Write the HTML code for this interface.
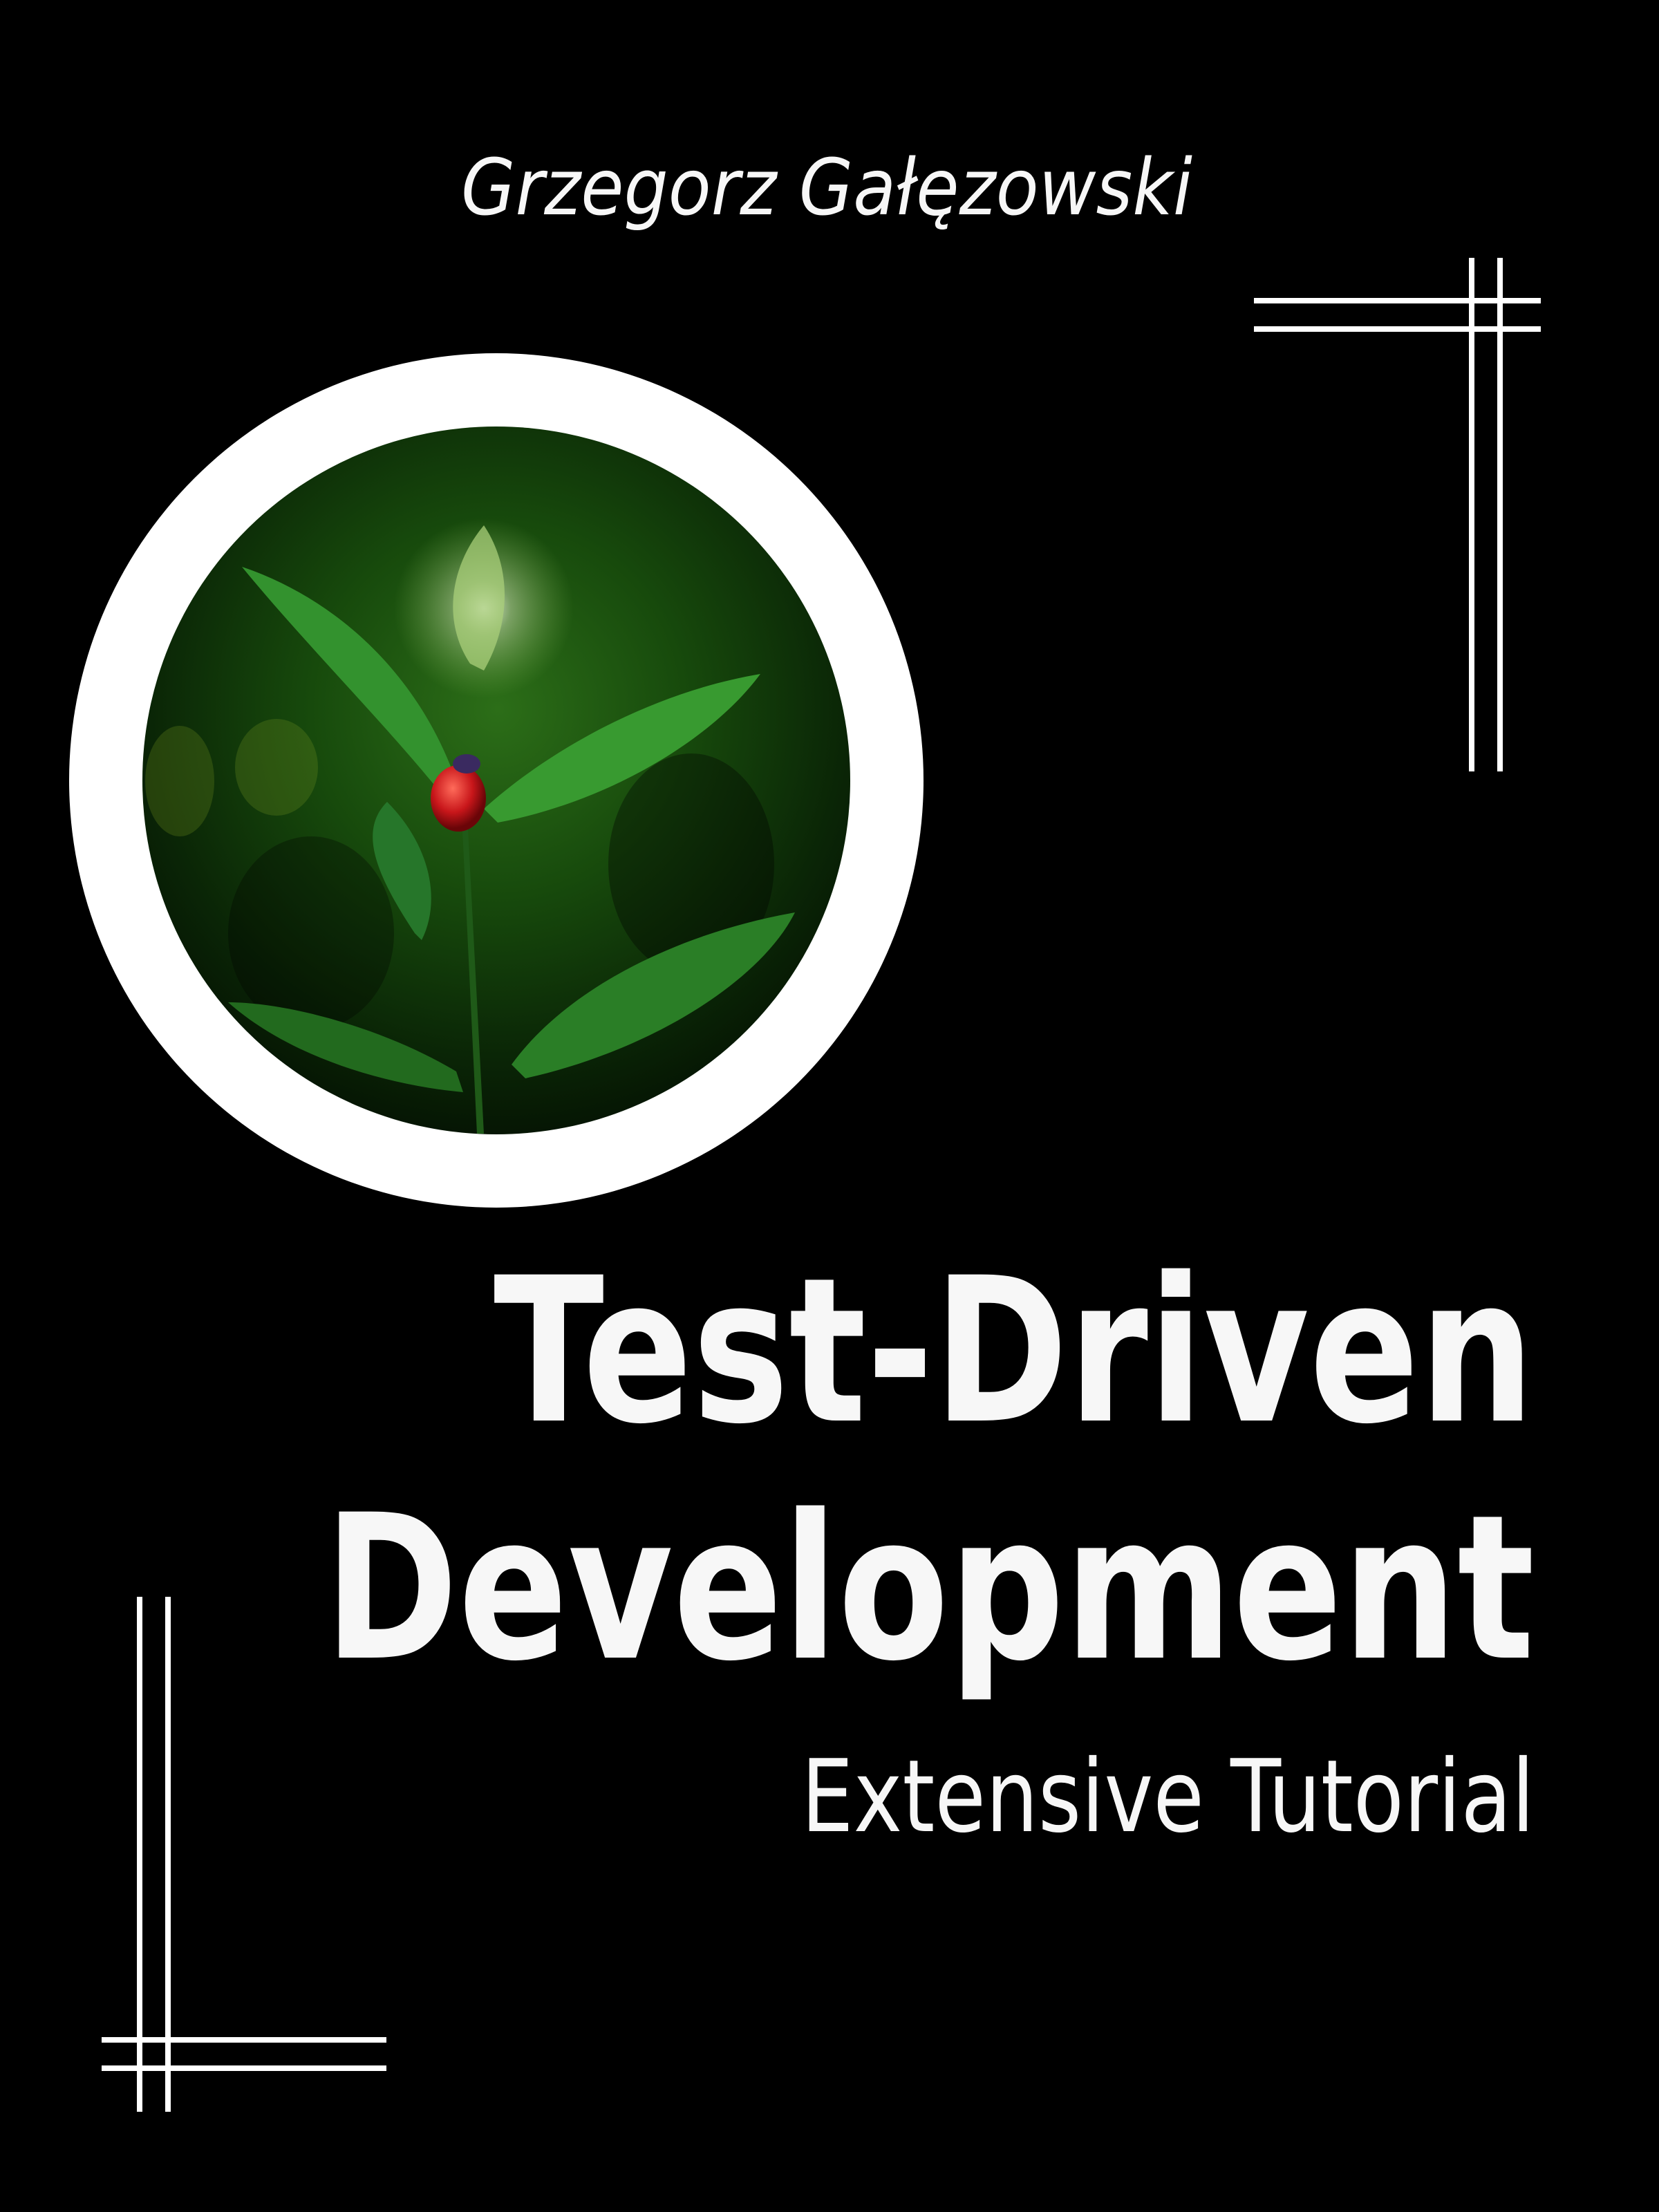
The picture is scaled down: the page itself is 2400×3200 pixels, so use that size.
<!DOCTYPE html>
<html><head><meta charset="utf-8"><style>html,body{margin:0;padding:0;background:#000;}svg{display:block}</style></head>
<body>
<svg width="2400" height="3200" viewBox="0 0 2400 3200" xmlns="http://www.w3.org/2000/svg">
<defs>
<radialGradient id="bg" cx="0.5" cy="0.4" r="0.65">
<stop offset="0" stop-color="#2c6e18"/>
<stop offset="0.4" stop-color="#174a0c"/>
<stop offset="0.75" stop-color="#0a2506"/>
<stop offset="1" stop-color="#030d02"/>
</radialGradient>
<radialGradient id="glow" cx="0.5" cy="0.5" r="0.5">
<stop offset="0" stop-color="#ffffff" stop-opacity="0.9"/>
<stop offset="0.3" stop-color="#e8f5c8" stop-opacity="0.45"/>
<stop offset="1" stop-color="#9acd60" stop-opacity="0"/>
</radialGradient>
<radialGradient id="bug" cx="0.4" cy="0.35" r="0.6">
<stop offset="0" stop-color="#ff6b5a"/>
<stop offset="0.6" stop-color="#c8161a"/>
<stop offset="1" stop-color="#6a0508"/>
</radialGradient>
<clipPath id="c"><circle cx="718" cy="1129" r="512"/></clipPath>
</defs>
<rect width="2400" height="3200" fill="#000"/>
<circle cx="718" cy="1129" r="618" fill="#fff"/>
<g clip-path="url(#c)">
<rect x="200" y="610" width="1040" height="1040" fill="url(#bg)"/>
<ellipse cx="260" cy="1130" rx="50" ry="80" fill="#5d7a1a" opacity="0.35"/>
<ellipse cx="400" cy="1110" rx="60" ry="70" fill="#6a8a20" opacity="0.3"/>
<ellipse cx="1000" cy="1250" rx="120" ry="160" fill="#000" opacity="0.35"/>
<ellipse cx="450" cy="1350" rx="120" ry="140" fill="#000" opacity="0.3"/>
<path d="M640 1150 C560 1050 440 930 350 820 C470 860 600 960 660 1130 Z" fill="#33922e"/>
<path d="M700 1170 C800 1080 950 1000 1100 975 C1030 1070 880 1160 720 1190 Z" fill="#389a30"/>
<path d="M740 1540 C820 1430 980 1350 1150 1320 C1100 1420 940 1520 760 1560 Z" fill="#2a7e26"/>
<path d="M660 1550 C560 1490 420 1450 330 1450 C420 1530 560 1570 670 1580 Z" fill="#226a1e"/>
<path d="M600 1350 C540 1260 520 1200 560 1160 C620 1220 640 1300 610 1360 Z" fill="#26762a"/>
<path d="M668 1180 L676 1180 L700 1640 L690 1640 Z" fill="#1f5a18"/>
<ellipse cx="700" cy="880" rx="130" ry="130" fill="url(#glow)"/>
<path d="M680 960 C640 900 650 820 700 760 C740 820 740 900 700 970 Z" fill="#a9cf7a" opacity="0.75"/>
<ellipse cx="663" cy="1155" rx="40" ry="48" fill="url(#bug)"/>
<ellipse cx="675" cy="1105" rx="20" ry="14" fill="#3a2a60"/>
</g>
<g fill="#fff">
<rect x="1814" y="431" width="415" height="8"/>
<rect x="1814" y="472" width="415" height="8"/>
<rect x="2125" y="373" width="8" height="743"/>
<rect x="2166" y="373" width="8" height="743"/>
<rect x="198" y="2310" width="8" height="745"/>
<rect x="239" y="2310" width="8" height="745"/>
<rect x="147" y="2947" width="412" height="8"/>
<rect x="147" y="2988" width="412" height="8"/>
</g>
<g fill="#f7f7f7" font-family="'DejaVu Sans','Liberation Sans',sans-serif">
<text x="667" y="310" font-size="112" font-style="italic" textLength="1058" lengthAdjust="spacingAndGlyphs">Grzegorz Gałęzowski</text>
<text x="714" y="2055" font-size="290" font-weight="bold" textLength="1506" lengthAdjust="spacingAndGlyphs">Test-Driven</text>
<text x="469" y="2398" font-size="290" font-weight="bold" textLength="1751" lengthAdjust="spacingAndGlyphs">Development</text>
<text x="1159" y="2649" font-size="145" textLength="1061" lengthAdjust="spacingAndGlyphs">Extensive Tutorial</text>
</g>
</svg>
</body></html>
